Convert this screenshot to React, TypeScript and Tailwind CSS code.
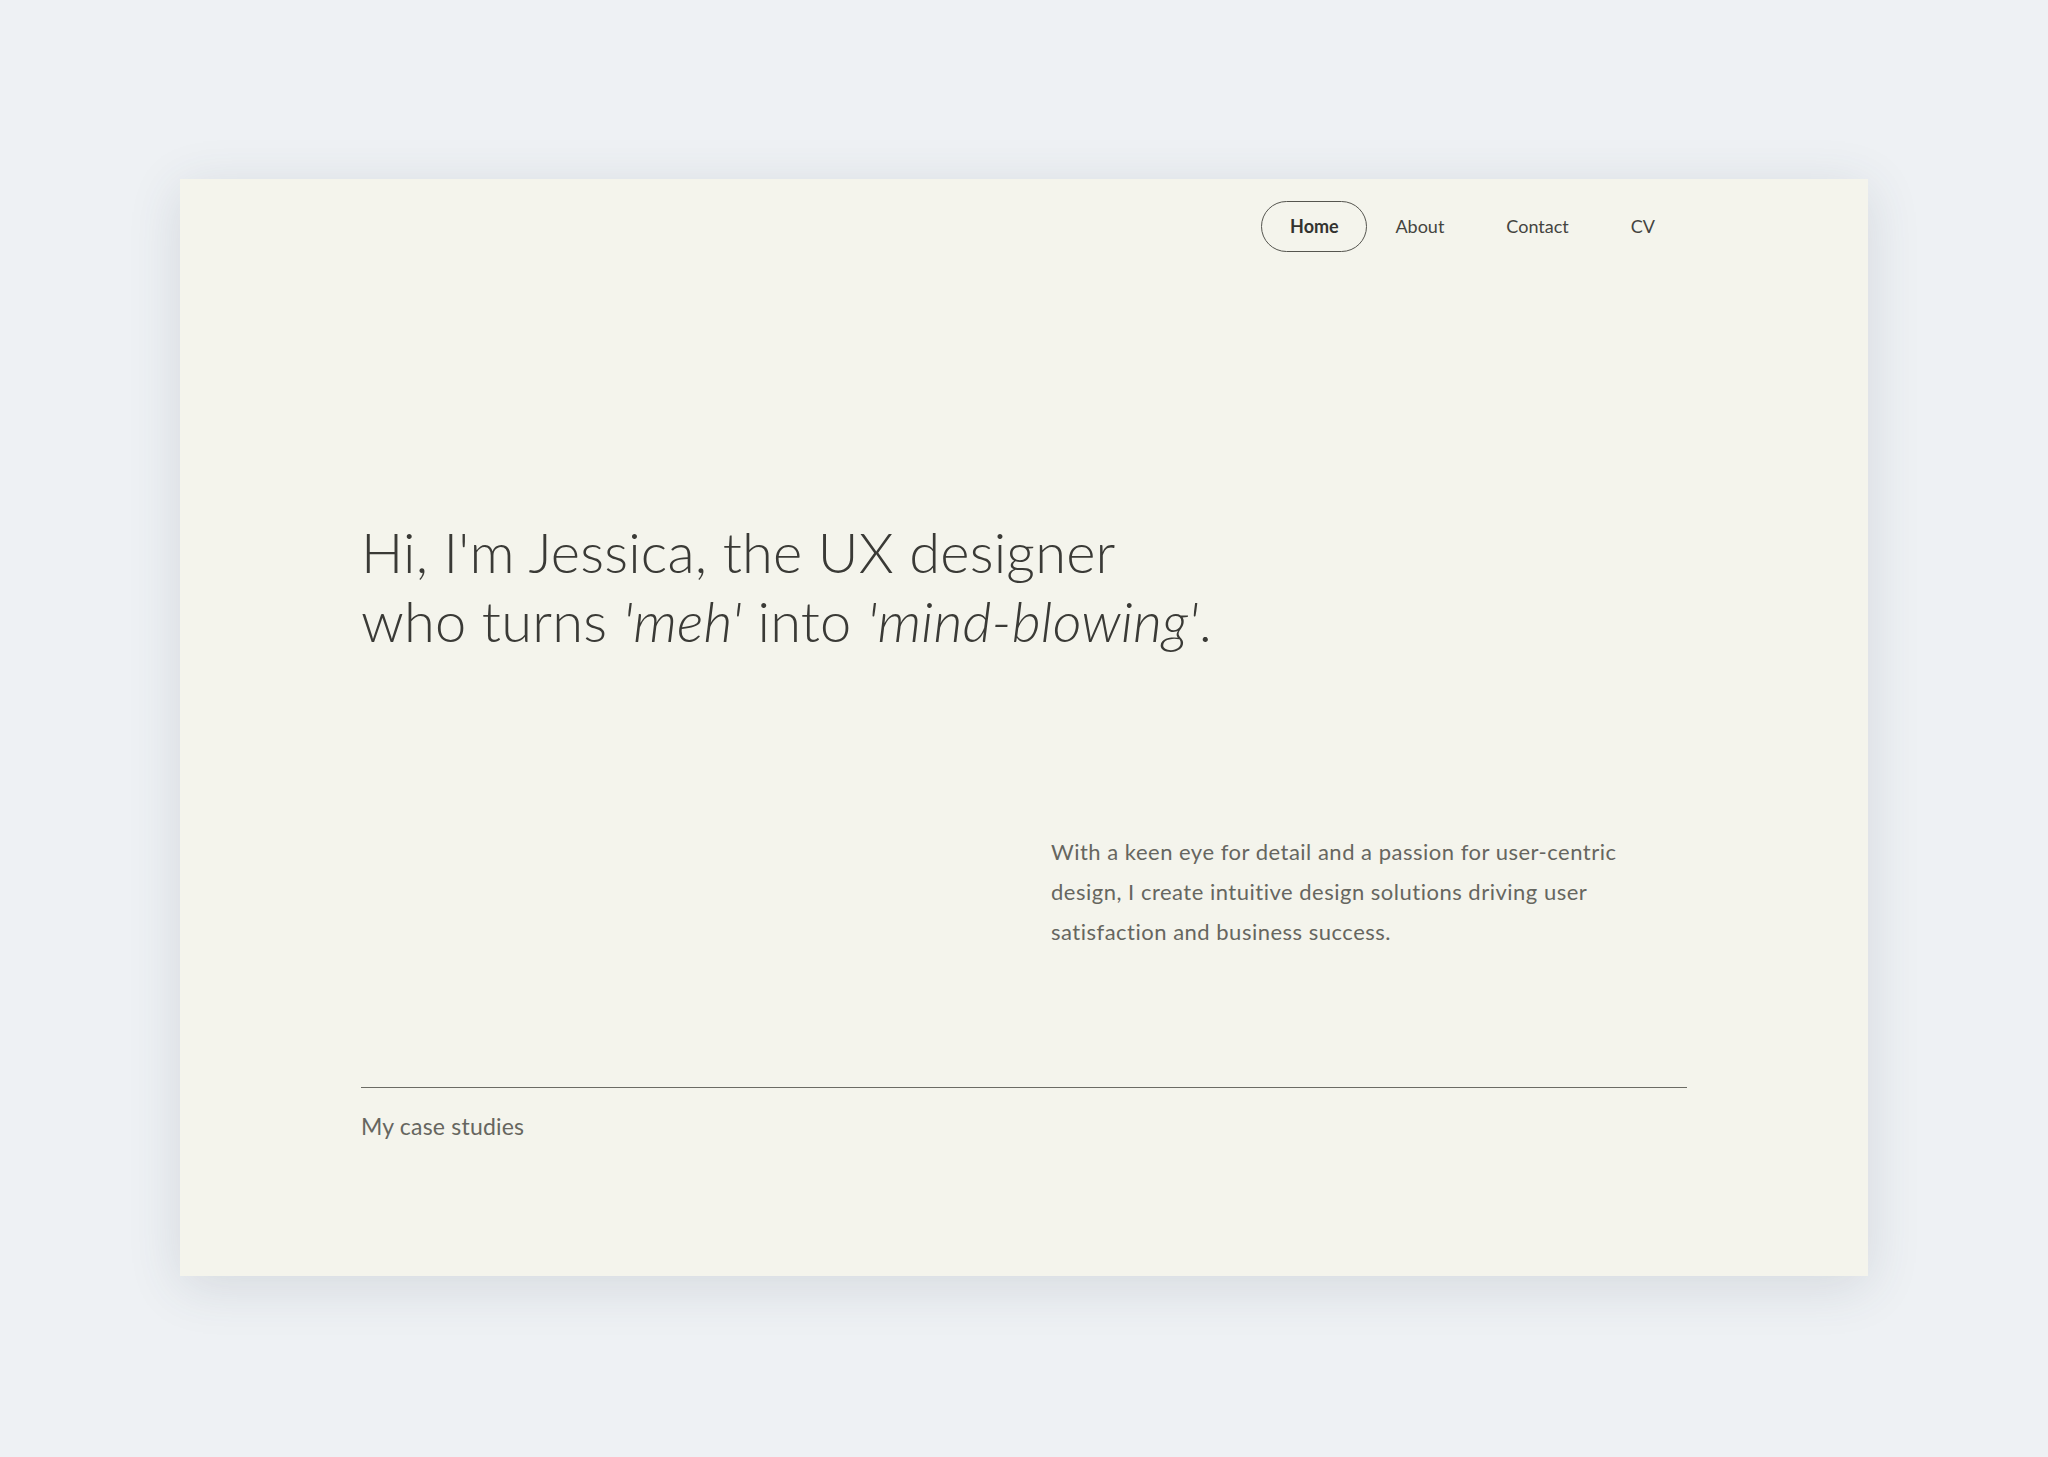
export default function App() {
  return (
    <div className="min-h-[1457px] w-full bg-[#eef1f4] pt-[179px] font-['Lato',sans-serif]">
      <div className="mx-auto flex h-[1097px] w-[1688px] flex-col bg-[#f4f4ec] px-[181px] shadow-[0_10px_50px_rgba(60,70,90,0.14)]">
        {/* Nav */}
        <nav className="flex items-center justify-end pr-[32px] pt-[22px] text-[18px] text-[#44443f]">
          <a className="flex h-[51px] w-[106px] items-center justify-center rounded-full border-[1.5px] border-[#55554f] font-bold text-[#333330]">
            Home
          </a>
          <a className="ml-[28px]">About</a>
          <a className="ml-[62px]">Contact</a>
          <a className="ml-[62px]">CV</a>
        </nav>

        {/* Hero */}
        <h1 className="mt-[265px] text-[56px] leading-[69px] font-light tracking-[0.2px] text-[#3a3a36]">
          Hi, I'm Jessica, the UX designer
          <br />
          who turns <em>'meh'</em> into <em>'mind-blowing'</em>.
        </h1>

        <p className="mt-[177px] ml-[690px] w-[595px] text-[22px] leading-[40px] tracking-[0.5px] text-[#66665f]">
          With a keen eye for detail and a passion for user-centric design, I
          create intuitive design solutions driving user satisfaction and
          business success.
        </p>

        <div className="mt-[135px] border-t-[1.5px] border-[#6b6b64]" />
        <div className="mt-[21px] text-[23px] tracking-[0.2px] text-[#66665f]">My case studies</div>
      </div>
    </div>
  );
}
